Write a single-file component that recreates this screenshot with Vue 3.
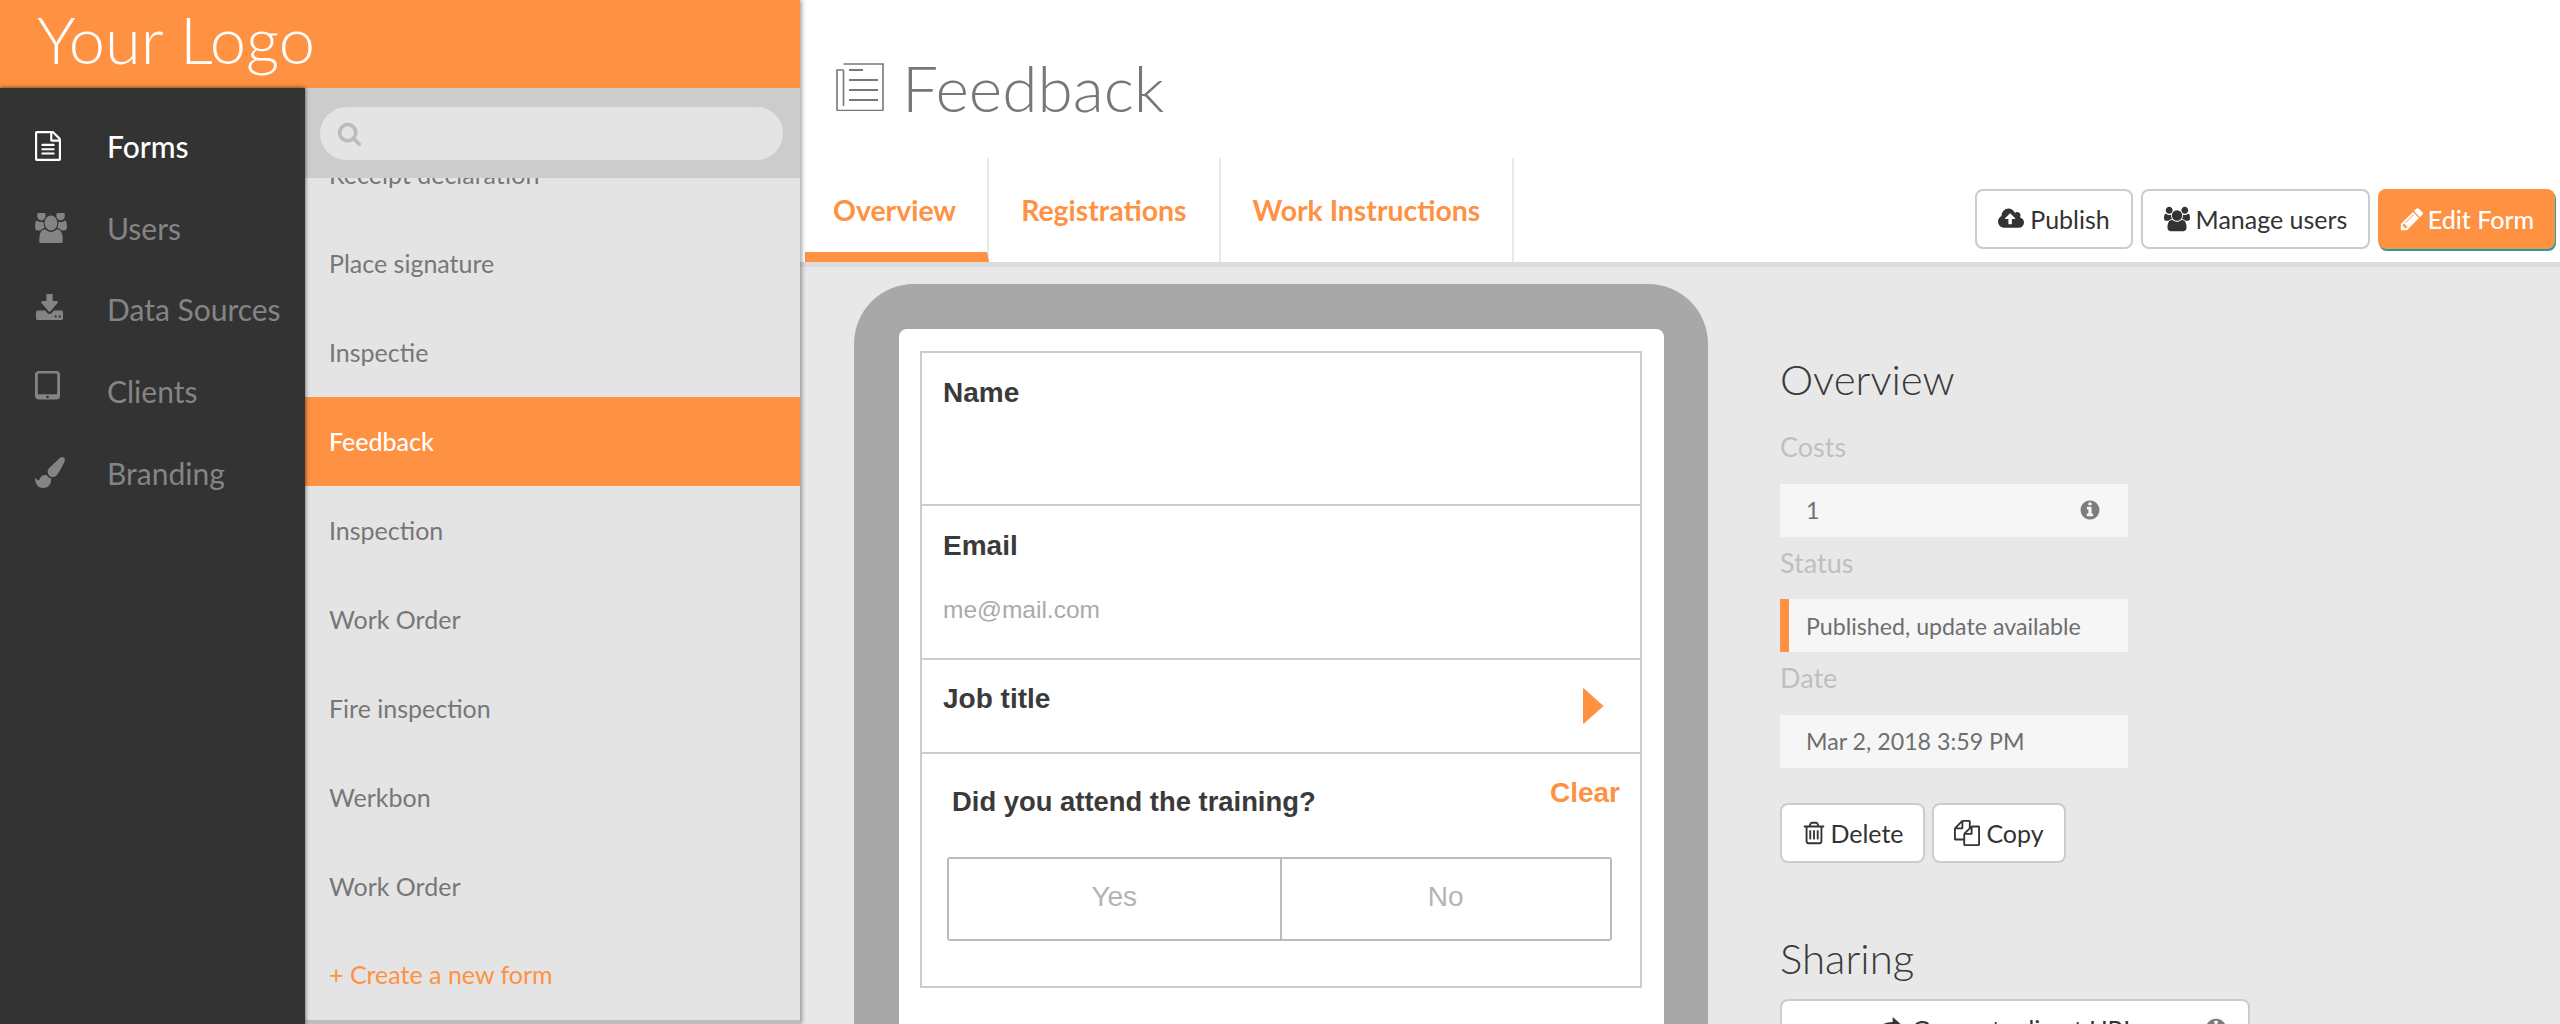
<template>
  <div class="page">
    <aside class="left">
      <div class="logo">Your Logo</div>
      <div class="left-body">
        <nav class="nav">
          <a v-for="item in navItems" :key="item.label" class="nav-item" :class="{ active: item.active }">
            <span class="nav-slot">
              <svg :class="item.cls" :viewBox="item.box" :width="item.w" :height="item.h" preserveAspectRatio="none" aria-hidden="true"><path :d="item.icon" /></svg>
            </span>
            <span>{{ item.label }}</span>
          </a>
        </nav>
        <section class="forms">
          <div class="search">
            <div class="search-pill">
              <svg viewBox="0 0 1792 1792" aria-hidden="true"><path :d="icons.search" /></svg>
            </div>
          </div>
          <div class="form-scroll">
            <ul class="form-list">
              <li v-for="(form, i) in forms" :key="i" :class="{ current: form === 'Feedback' }">{{ form }}</li>
            </ul>
          </div>
          <a class="create">+ Create a new form</a>
        </section>
      </div>
    </aside>

    <main class="main">
      <header class="head">
        <h1 class="title">
          <svg viewBox="0 0 48 48" aria-hidden="true">
            <path d="M7.500 7v36M7.500 1h39.500v45.500q0 1-1 1H2q-1 0-1-1V7h6.500" fill="none" stroke="#777" stroke-width="1.600" />
            <path d="M13 7h14M13 17h29M13 27h29M13 37h29" fill="none" stroke="#777" stroke-width="1.800" />
          </svg>
          Feedback
        </h1>
        <div class="tabbar">
          <a v-for="tab in tabs" :key="tab" class="tab" :class="{ on: tab === 'Overview' }">{{ tab }}</a>
          <div class="actions">
            <button class="btn publish" type="button">
              <svg viewBox="0 0 1920 1792" aria-hidden="true"><path :d="icons.cloud" /></svg>Publish
            </button>
            <button class="btn manage" type="button">
              <svg viewBox="0 0 1920 1792" aria-hidden="true"><path :d="icons.users" /></svg>Manage users
            </button>
            <button class="btn edit" type="button">
              <svg viewBox="0 0 1792 1792" aria-hidden="true"><path :d="icons.pencil" /></svg>Edit Form
            </button>
          </div>
        </div>
      </header>

      <div class="content">
        <div class="phone">
          <div class="screen">
            <div class="fields">
              <div class="field f-name"><label>Name</label></div>
              <div class="field f-email">
                <label>Email</label>
                <span class="placeholder">me@mail.com</span>
              </div>
              <div class="field f-job">
                <label>Job title</label>
                <svg class="caret" viewBox="0 0 21 36" aria-hidden="true"><path d="M1 0.500 20.500 18 1 35.500q-1 0.500-1-1V1q0-1 1-0.500z" /></svg>
              </div>
              <div class="field f-question">
                <div class="q-head">
                  <label>Did you attend the training?</label>
                  <a class="clear">Clear</a>
                </div>
                <div class="choice">
                  <span>Yes</span>
                  <span>No</span>
                </div>
              </div>
            </div>
          </div>
        </div>

        <div class="side">
          <h2>Overview</h2>
          <div class="label first">Costs</div>
          <div class="value">
            <span>1</span>
            <svg class="info" viewBox="0 0 1792 1792" aria-hidden="true"><path :d="icons.info" /></svg>
          </div>
          <div class="label">Status</div>
          <div class="value flagged"><span>Published, update available</span></div>
          <div class="label">Date</div>
          <div class="value"><span>Mar 2, 2018 3:59 PM</span></div>
          <div class="side-actions">
            <button class="btn delete" type="button">
              <svg viewBox="0 0 1792 1792" aria-hidden="true"><path :d="icons.trash" /></svg>Delete
            </button>
            <button class="btn copy" type="button">
              <svg viewBox="0 0 1792 1792" aria-hidden="true"><path :d="icons.files" /></svg>Copy
            </button>
          </div>
          <h2 class="sharing">Sharing</h2>
          <button class="btn url" type="button">
            <svg class="share" viewBox="0 0 1792 1792" aria-hidden="true"><path :d="icons.share" /></svg>
            Generate direct URL
            <svg class="url-info" viewBox="0 0 1792 1792" aria-hidden="true"><path :d="icons.info" /></svg>
          </button>
        </div>
      </div>
    </main>
  </div>
</template>

<script setup>
const icons = {
  file: 'M1596 380q28 28 48 76t20 88v1152q0 40-28 68t-68 28h-1344q-40 0-68-28t-28-68v-1600q0-40 28-68t68-28h896q40 0 88 20t76 48zm-444-244v376h376q-10-29-22-41l-313-313q-12-12-41-22zm384 1528v-1024h-416q-40 0-68-28t-28-68v-416h-768v1536h1280zm-1024-864q0-14 9-23t23-9h704q14 0 23 9t9 23v64q0 14-9 23t-23 9h-704q-14 0-23-9t-9-23v-64zm736 224q14 0 23 9t9 23v64q0 14-9 23t-23 9h-704q-14 0-23-9t-9-23v-64q0-14 9-23t23-9h704zm0 256q14 0 23 9t9 23v64q0 14-9 23t-23 9h-704q-14 0-23-9t-9-23v-64q0-14 9-23t23-9h704z',
  users: 'M593 896q-162 5-265 128h-134q-82 0-138-40.500t-56-118.500q0-353 124-353 6 0 43.500 21t97.500 42.500 119 21.500q67 0 133-23-5 37-5 66 0 139 81 256zm1071 637q0 120-73 189.500t-194 69.500h-874q-121 0-194-69.500t-73-189.500q0-53 3.500-103.500t14-109 26.500-108.500 43-97.500 62-81 85.500-53.500 111.500-20q10 0 43 21.500t73 48 107 48 135 21.500 135-21.500 107-48 73-48 43-21.500q61 0 111.500 20t85.500 53.500 62 81 43 97.500 26.500 108.500 14 109 3.500 103.500zm-1024-1277q0 106-75 181t-181 75-181-75-75-181 75-181 181-75 181 75 75 181zm704 384q0 159-112.500 271.500t-271.500 112.500-271.500-112.500-112.500-271.500 112.500-271.500 271.500-112.500 271.500 112.500 112.500 271.500zm576 225q0 78-56 118.500t-138 40.500h-134q-103-123-265-128 81-117 81-256 0-29-5-66 66 23 133 23 59 0 119-21.500t97.500-42.500 43.500-21q124 0 124 353zm-128-609q0 106-75 181t-181 75-181-75-75-181 75-181 181-75 181 75 75 181z',
  download: 'M1344 1344q0-26-19-45t-45-19-45 19-19 45 19 45 45 19 45-19 19-45zm256 0q0-26-19-45t-45-19-45 19-19 45 19 45 45 19 45-19 19-45zm128-224v320q0 40-28 68t-68 28h-1472q-40 0-68-28t-28-68v-320q0-40 28-68t68-28h465l135 136q58 56 136 56t136-56l136-136h464q40 0 68 28t28 68zm-325-569q17 41-14 70l-448 448q-18 19-45 19t-45-19l-448-448q-31-29-14-70 17-39 59-39h256v-448q0-26 19-45t45-19h256q26 0 45 19t19 45v448h256q42 0 59 39z',
  tablet: 'M960 1408q0-26-19-45t-45-19-45 19-19 45 19 45 45 19 45-19 19-45zm384-160v-960q0-13-9.500-22.500t-22.500-9.500h-832q-13 0-22.500 9.500t-9.500 22.500v960q0 13 9.500 22.500t22.500 9.500h832q13 0 22.500-9.500t9.500-22.500zm128-960v1088q0 66-47 113t-113 47h-832q-66 0-113-47t-47-113v-1088q0-66 47-113t113-47h832q66 0 113 47t47 113z',
  brush: 'M1615 0q70 0 122.500 46.500t52.500 116.500q0 63-45 151-332 629-465 752-97 91-218 91-126 0-216.500-92.500t-90.500-219.500q0-128 92-212l638-579q59-54 130-54zm-909 1034q39 76 106.500 130t150.500 76l1 71q4 213-129.500 347t-348.500 134q-123 0-218-46.500t-152.500-127.500-86.500-183-29-220q7 5 41 30t62 44.500 59 36.500 46 17q41 0 55-37 25-66 57.500-112.500t69.500-76 88-47.500 103-25.500 125-10.500z',
  search: 'M1216 832q0-185-131.500-316.500t-316.500-131.500-316.500 131.500-131.500 316.500 131.500 316.500 316.500 131.500 316.500-131.500 131.500-316.500zm512 832q0 52-38 90t-90 38q-54 0-90-38l-343-342q-179 124-399 124-143 0-273.500-55.500t-225-150-150-225-55.500-273.500 55.500-273.500 150-225 225-150 273.500-55.500 273.500 55.500 225 150 150 225 55.500 273.500q0 220-124 399l343 343q37 37 37 90z',
  info: 'M1152 1376v-160q0-14-9-23t-23-9h-96v-512q0-14-9-23t-23-9h-320q-14 0-23 9t-9 23v160q0 14 9 23t23 9h96v320h-96q-14 0-23 9t-9 23v160q0 14 9 23t23 9h448q14 0 23-9t9-23zm-128-896v-160q0-14-9-23t-23-9h-192q-14 0-23 9t-9 23v160q0 14 9 23t23 9h192q14 0 23-9t9-23zm640 416q0 209-103 385.500t-279.500 279.500-385.500 103-385.500-103-279.500-279.500-103-385.500 103-385.500 279.500-279.500 385.500-103 385.500 103 279.500 279.500 103 385.500z',
  pencil: 'M491 1536l91-91-235-235-91 91v107h128v128h107zm523-928q0-22-22-22-10 0-17 7l-542 542q-7 7-7 17 0 22 22 22 10 0 17-7l542-542q7-7 7-17zm-54-192l416 416-832 832h-416v-416zm683 96q0 53-37 90l-166 166-416-416 166-165q36-38 90-38 53 0 91 38l235 234q37 39 37 91z',
  cloud: 'M1280 864q0-14-9-23l-352-352q-9-9-23-9t-23 9l-351 351q-10 12-10 24 0 14 9 23t23 9h224v352q0 13 9.500 22.500t22.500 9.500h192q13 0 22.500-9.500t9.500-22.500v-352h224q13 0 22.500-9.500t9.500-22.500zm640 288q0 159-112.500 271.500t-271.500 112.500h-1088q-185 0-316.500-131.500t-131.500-316.500q0-130 70-240t188-165q-2-30-2-43 0-212 150-362t362-150q156 0 285.500 87t188.500 231q71-62 166-62 106 0 181 75t75 181q0 76-41 138 130 31 213.500 135.500t83.500 238.500z',
  trash: 'M704 736v576q0 14-9 23t-23 9h-64q-14 0-23-9t-9-23v-576q0-14 9-23t23-9h64q14 0 23 9t9 23zm256 0v576q0 14-9 23t-23 9h-64q-14 0-23-9t-9-23v-576q0-14 9-23t23-9h64q14 0 23 9t9 23zm256 0v576q0 14-9 23t-23 9h-64q-14 0-23-9t-9-23v-576q0-14 9-23t23-9h64q14 0 23 9t9 23zm128 724v-948h-896v948q0 22 7 40.500t14.500 27 10.500 8.500h832q3 0 10.500-8.500t14.500-27 7-40.500zm-672-1076h448l-48-117q-7-9-17-11h-317q-10 2-17 11zm928 32v64q0 14-9 23t-23 9h-96v948q0 83-47 143.500t-113 60.500h-832q-66 0-113-58.500t-47-141.500v-952h-96q-14 0-23-9t-9-23v-64q0-14 9-23t23-9h309l70-167q15-37 54-63t79-26h320q40 0 79 26t54 63l70 167h309q14 0 23 9t9 23z',
  files: 'M1696 384q40 0 68 28t28 68v1216q0 40-28 68t-68 28h-960q-40 0-68-28t-28-68v-288h-544q-40 0-68-28t-28-68v-672q0-40 20-88t48-76l408-408q28-28 76-48t88-20h416q40 0 68 28t28 68v328q68-40 128-40h416zm-544 213l-299 299h299v-299zm-640-384l-299 299h299v-299zm196 647l316-316v-416h-384v416q0 40-28 68t-68 28h-416v640h512v-256q0-40 20-88t48-76zm956 804v-1152h-384v416q0 40-28 68t-68 28h-416v640h896z',
  share: 'M1792 640l-640-576v352q-560 0-880 288-272 250-272 752 200-320 480-416 240-80 672-64v352z',
};

const navItems = [
  { label: 'Forms', icon: icons.file, box: '128 0 1536 1792', w: 26, h: 30, active: true },
  { label: 'Users', icon: icons.users, box: '0 128 1920 1536', w: 32, h: 30 },
  { label: 'Data Sources', icon: icons.download, box: '0 128 1728 1408', w: 28, h: 26, cls: 'up-2' },
  { label: 'Clients', icon: icons.tablet, box: '320 128 1152 1536', w: 25, h: 31, cls: 'up-4' },
  { label: 'Branding', icon: icons.brush, box: '0 0 1792 1792', w: 30, h: 31 },
];

const forms = ['Receipt declaration', 'Place signature', 'Inspectie', 'Feedback', 'Inspection', 'Work Order', 'Fire inspection', 'Werkbon', 'Work Order'];
const tabs = ['Overview', 'Registrations', 'Work Instructions'];
</script>

<style>
html,
body {
  margin: 0;
  overflow: hidden;
}
</style>

<style scoped>
.page {
  display: flex;
  width: 2560px;
  height: 1024px;
  overflow: hidden;
  background: #e8e8e8;
  font-family: Lato, "Liberation Sans", sans-serif;
  color: #333;
}

.left {
  position: relative;
  z-index: 2;
  display: flex;
  flex-direction: column;
  flex: 0 0 800px;
  box-shadow: 2px 0 4px rgba(0, 0, 0, 0.35);
}
.logo {
  height: 88px;
  padding-left: 37px;
  background: #ff9142;
  color: #fff;
  font-size: 65px;
  font-weight: 300;
  line-height: 78px;
}
.left-body {
  display: flex;
  flex: 1;
  min-height: 0;
  background: #bcbcbc;
}

.nav {
  position: relative;
  z-index: 1;
  flex: 0 0 305px;
  padding-top: 17px;
  box-sizing: border-box;
  background: #333;
  box-shadow: 0 0 4px rgba(0, 0, 0, 0.7);
}
.nav-item {
  display: flex;
  align-items: center;
  height: 81.700px;
  padding-left: 35px;
  color: #848484;
  font-size: 30px;
}
.nav-item.active {
  color: #fff;
  font-weight: 500;
}
.nav-slot {
  display: flex;
  flex: 0 0 72px;
}
.nav-slot svg {
  fill: currentColor;
}
.up-2 { margin-top: -4px; }
.up-4 { margin-top: -9px; }

.forms {
  display: flex;
  flex-direction: column;
  flex: 1;
  height: 932px;
  background: #e4e4e4;
}
.search {
  flex: 0 0 90px;
  box-sizing: border-box;
  padding: 19px 17px 0 15px;
  background: #ccc;
}
.search-pill {
  display: flex;
  align-items: center;
  height: 53px;
  padding-left: 17px;
  border-radius: 27px;
  background: #e4e4e4;
}
.search-pill svg {
  width: 25px;
  height: 25px;
  fill: #bbb;
}
.form-scroll {
  flex: 1;
  min-height: 0;
  overflow: hidden;
}
.form-list {
  margin: -48px 0 0;
  padding: 0;
  list-style: none;
}
.form-list li {
  height: 89px;
  padding-left: 24px;
  color: #777;
  font-size: 25px;
  line-height: 88px;
}
.form-list li.current {
  background: #ff9142;
  color: #fff;
  font-weight: 500;
}
.create {
  flex: 0 0 90px;
  padding-left: 24px;
  color: #ff9142;
  font-size: 25px;
  line-height: 92px;
}

.main {
  flex: 1;
  min-width: 0;
  display: flex;
  flex-direction: column;
}
.head {
  flex: 0 0 262px;
  padding-left: 5px;
  background: #fff;
  border-bottom: 5px solid #dcdcdc;
}
.title {
  display: flex;
  align-items: center;
  box-sizing: border-box;
  height: 158px;
  margin: 0;
  padding: 16px 0 0 31px;
  color: #777;
  font-size: 64px;
  font-weight: 300;
}
.title svg {
  width: 48px;
  height: 48px;
  margin-right: 18px;
}
.tabbar {
  display: flex;
  height: 104px;
}
.tab {
  box-sizing: border-box;
  padding: 0 31px 0 28px;
  border-right: 2px solid #e8e8e8;
  color: #ff9142;
  font-size: 28.400px;
  font-weight: 700;
  line-height: 104px;
}
.tab + .tab {
  padding: 0 32px;
}
.tab.on {
  border-bottom: 10px solid #ff9142;
}
.actions {
  display: flex;
  gap: 8px;
  margin-left: auto;
  padding: 31px 5px 0 0;
}
.btn {
  display: inline-flex;
  align-items: center;
  justify-content: center;
  box-sizing: border-box;
  height: 60px;
  padding: 0;
  border: 2px solid #ccc;
  border-radius: 8px;
  background: #fff;
  color: #333;
  font-family: inherit;
  font-size: 25px;
}
.btn svg {
  fill: currentColor;
  width: 26px;
  height: 26px;
  margin-right: 6px;
}
.publish { width: 158px; }
.manage { width: 229px; }
.edit {
  width: 177px;
  border: 0;
  background: #ff9142;
  color: #fff;
  font-weight: 500;
  box-shadow: 1px 2px 0 #1f9da3;
}
.edit svg,
.delete svg {
  margin-right: 3px;
}

.content {
  flex: 1;
  min-height: 0;
  display: flex;
  align-items: flex-start;
  padding: 17px 0 0 54px;
}
.phone {
  flex: 0 0 854px;
  box-sizing: border-box;
  height: 900px;
  padding: 45px 44px 0 45px;
  border-radius: 60px 60px 0 0;
  background: #a8a8a8;
}
.screen {
  height: 800px;
  padding: 22px 22px 0 21px;
  box-sizing: border-box;
  border-radius: 8px 8px 0 0;
  background: #fff;
}
.fields {
  border: 2px solid #ccc;
  height: 637px;
  box-sizing: border-box;
  font-family: "Liberation Sans", Arial, sans-serif;
}
.field {
  position: relative;
  box-sizing: border-box;
  border-bottom: 2px solid #ccc;
  padding-left: 21px;
}
.field label {
  display: block;
  color: #3a3a3a;
  font-size: 28px;
  font-weight: 700;
  line-height: 32px;
}
.f-name {
  height: 153px;
  padding-top: 24px;
}
.f-email {
  height: 154px;
  padding-top: 24px;
}
.placeholder {
  display: block;
  margin-top: 32px;
  color: #aaa;
  font-size: 24.500px;
  line-height: 32px;
}
.f-job {
  display: flex;
  justify-content: space-between;
  height: 94px;
  padding: 23px 36px 0 21px;
}
.caret {
  width: 21px;
  height: 36px;
  margin-top: 5px;
  fill: #ff9142;
}
.f-question {
  border-bottom: 0;
  padding: 0 28px 0 25px;
}
.q-head {
  display: flex;
  justify-content: space-between;
  height: 103px;
  padding: 0 0 0 5px;
}
.q-head label {
  margin-top: 32px;
  font-size: 27.400px;
}
.clear {
  margin-top: 23px;
  margin-right: -8px;
  color: #ff9142;
  font-size: 28px;
  font-weight: 700;
  line-height: 32px;
}
.choice {
  display: grid;
  grid-template-columns: 1fr 1fr;
  height: 84px;
  border: 2px solid #bbb;
  border-radius: 3px;
  box-sizing: border-box;
}
.choice span {
  color: #b4b4b4;
  font-size: 28px;
  line-height: 76px;
  text-align: center;
}
.choice span + span {
  border-left: 2px solid #bbb;
}

.side {
  flex: 0 0 480px;
  margin-left: 72px;
}
.side h2 {
  margin: 70px 0 0;
  color: #3a3a3a;
  font-size: 42px;
  font-weight: 300;
  line-height: 50px;
}
.label {
  height: 62.500px;
  color: #bfbfbf;
  font-size: 27px;
  line-height: 52px;
}
.label.first {
  margin-top: 17px;
}
.value {
  display: flex;
  align-items: center;
  justify-content: space-between;
  box-sizing: border-box;
  width: 348px;
  height: 53px;
  padding: 0 28px 0 26px;
  background: #f6f6f6;
  color: #6e6e6e;
  font-size: 23.200px;
}
.flagged {
  padding-left: 17px;
  border-left: 9px solid #ff9142;
}
.info {
  width: 22px;
  height: 22px;
  margin-right: -1px;
  fill: #7c7c7c;
}
.side-actions {
  display: flex;
  gap: 7px;
  margin-top: 35px;
}
.delete { width: 145px; }
.copy { width: 134px; }
.side .sharing {
  margin-top: 70px;
}
.url {
  position: relative;
  justify-content: flex-start;
  width: 470px;
  margin-top: 16px;
  padding-left: 94px;
}
.url .share {
  margin-right: 10px;
}
.url .url-info {
  position: absolute;
  right: 20px;
  margin: 0;
  width: 24px;
  height: 24px;
  fill: #7c7c7c;
}
</style>
